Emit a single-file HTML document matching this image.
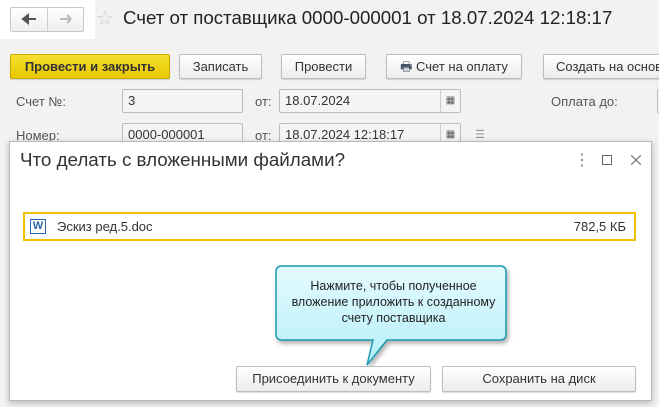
<!DOCTYPE html>
<html><head><meta charset="utf-8"><style>
*{box-sizing:border-box;margin:0;padding:0}
body{width:659px;height:407px;overflow:hidden;background:#f2f2f2;font-family:"Liberation Sans",Arial,sans-serif;position:relative;color:#333}
.a{position:absolute;white-space:nowrap}
.btn{position:absolute;height:25px;border:1px solid #bdbdbd;border-radius:2px;background:linear-gradient(#fff,#ececec);font-size:13px;color:#333;text-align:center;line-height:23px;box-shadow:0 1px 1px rgba(0,0,0,.15);white-space:nowrap;overflow:hidden}
.fld{position:absolute;height:24px;border:1px solid #bcbcbc;border-radius:2px;background:#f4f4f4;font-size:13px;line-height:22px;padding-left:5px;color:#333}
.lbl{position:absolute;font-size:13px;color:#555}
.cal{position:absolute;right:0;top:0;width:20px;height:22px;border-left:1px solid #ccc;font-size:10px;text-align:center;line-height:22px;color:#555}
</style></head><body>
<div class="a" style="left:0;top:0;width:95px;height:39px;background:#fff"></div>
<div class="a" style="left:10px;top:7px;width:74px;height:25px;border:1px solid #c8c8c8;border-radius:2px;background:linear-gradient(#fff,#eee)"></div>
<div class="a" style="left:47px;top:8px;width:1px;height:23px;background:#ccc"></div>
<svg class="a" style="left:20px;top:13px" width="60" height="12"><path d="M3,6 H16 M3,6 L8,2 V10 Z" stroke="#555" stroke-width="2" fill="#555"/><path d="M40,6 H51 M51,6 L47,2 M51,6 L47,10" stroke="#bbb" stroke-width="2" fill="none"/></svg>
<div class="a" style="left:96px;top:6px;font-size:20px;color:#ccc">☆</div>
<div class="a" style="left:123px;top:7px;font-size:18.7px;color:#222">Счет от поставщика 0000-000001 от 18.07.2024 12:18:17</div>

<div class="btn" style="left:10px;top:54px;width:160px;background:linear-gradient(#f6de30,#e8c800);border-color:#c9ab00;font-weight:bold;color:#333">Провести и закрыть</div>
<div class="btn" style="left:179px;top:54px;width:83px">Записать</div>
<div class="btn" style="left:281px;top:54px;width:85px">Провести</div>
<div class="btn" style="left:386px;top:54px;width:136px"><span style="color:#456">🖶</span> Счет на оплату</div>
<div class="btn" style="left:543px;top:54px;width:130px;text-align:left;padding-left:12px">Создать на основании</div>

<div class="lbl" style="left:16px;top:94px">Счет №:</div>
<div class="fld" style="left:122px;top:89px;width:121px">3</div>
<div class="lbl" style="left:255px;top:94px">от:</div>
<div class="fld" style="left:279px;top:89px;width:182px">18.07.2024<div class="cal">▦</div></div>
<div class="lbl" style="left:551px;top:94px">Оплата до:</div>
<div class="fld" style="left:657px;top:89px;width:20px"></div>

<div class="lbl" style="left:16px;top:128px">Номер:</div>
<div class="fld" style="left:122px;top:123px;width:121px">0000-000001</div>
<div class="lbl" style="left:255px;top:128px">от:</div>
<div class="fld" style="left:279px;top:123px;width:182px">18.07.2024 12:18:17<div class="cal">▦</div></div>
<div class="a" style="left:475px;top:128px;font-size:11px;color:#999">☰</div>

<div class="a" style="left:9px;top:141px;width:643px;height:260px;background:#fff;border:1px solid #b8b8b8;box-shadow:0 2px 6px rgba(0,0,0,.25)"></div>
<div class="a" style="left:20px;top:149px;font-size:18.8px;color:#333">Что делать с вложенными файлами?</div>
<div class="a" style="left:574px;top:150px;font-size:16px;color:#777">⋮</div>
<div class="a" style="left:602px;top:155px;width:10px;height:10px;border:1px solid #666"></div>
<svg class="a" style="left:631px;top:155px" width="10" height="10"><path d="M0,0 L10,10 M10,0 L0,10" stroke="#777" stroke-width="1.2"/></svg>

<div class="a" style="left:23px;top:212px;width:613px;height:29px;border:2px solid #f2c200"></div>
<div class="a" style="left:30px;top:219px;width:16px;height:15px;border:1px solid #2b64b0;color:#2b64b0;font-size:11px;font-weight:bold;text-align:center;line-height:13px">W</div>
<div class="a" style="left:57px;top:219px;font-size:13px;color:#333">Эскиз ред.5.doc</div>
<div class="a" style="left:560px;top:219px;width:66px;text-align:right;font-size:13px;color:#333">782,5 КБ</div>

<svg class="a" style="left:270px;top:262px" width="245" height="110">
<defs><linearGradient id="g" x1="0" y1="0" x2="0" y2="1"><stop offset="0" stop-color="#e4fbff"/><stop offset="1" stop-color="#b6eef8"/></linearGradient></defs>
<path d="M12,4 H230 Q236,4 236,10 V72 Q236,78 230,78 H117 L97,103 L103,78 H12 Q6,78 6,72 V10 Q6,4 12,4 Z" fill="url(#g)" stroke="#1a9bb0" stroke-width="1.5" style="filter:drop-shadow(2px 3px 2px rgba(0,0,0,.3))"/>
</svg>
<div class="a" style="left:276px;top:278px;width:235px;text-align:center;font-size:12.5px;line-height:16px;color:#222">Нажмите, чтобы полученное<br>вложение приложить к созданному<br>счету поставщика</div>

<div class="btn" style="left:236px;top:366px;width:195px;height:26px;line-height:24px">Присоединить к документу</div>
<div class="btn" style="left:442px;top:366px;width:194px;height:26px;line-height:24px">Сохранить на диск</div>
</body></html>
